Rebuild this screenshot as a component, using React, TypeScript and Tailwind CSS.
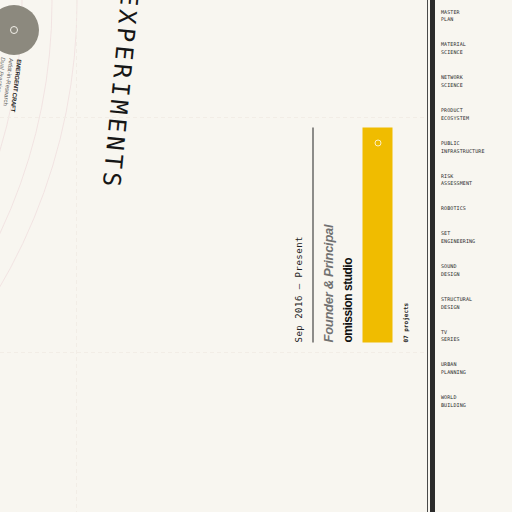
const topics = [
  ["MASTER", "PLAN"],
  ["MATERIAL", "SCIENCE"],
  ["NETWORK", "SCIENCE"],
  ["PRODUCT", "ECOSYSTEM"],
  ["PUBLIC", "INFRASTRUCTURE"],
  ["RISK", "ASSESSMENT"],
  ["ROBOTICS"],
  ["SET", "ENGINEERING"],
  ["SOUND", "DESIGN"],
  ["STRUCTURAL", "DESIGN"],
  ["TV", "SERIES"],
  ["URBAN", "PLANNING"],
  ["WORLD", "BUILDING"],
];

const Backdrop = () => (
  <svg className="absolute inset-0" width="427" height="512" viewBox="0 0 427 512">
    <g fill="none" stroke="#f0dede" strokeWidth="0.8">
      <circle cx="-488" cy="2" r="510" />
      <circle cx="-488" cy="2" r="540" />
      <circle cx="-488" cy="2" r="565" />
    </g>
    <g stroke="#f2ede6" strokeWidth="1" strokeDasharray="4 3">
      <line x1="76.5" y1="0" x2="76.5" y2="512" />
      <line x1="0" y1="117.5" x2="427" y2="117.5" />
      <line x1="0" y1="352.5" x2="427" y2="352.5" />
    </g>
  </svg>
);

const App = () => {
  return (
    <div className="flex h-[512px] w-[512px] overflow-hidden bg-[#f8f6f0]">
      <main className="relative w-[427px] shrink-0 overflow-hidden">
        <Backdrop />

        {/* node */}
        <div className="absolute left-[-11px] top-[5px] flex h-[50px] w-[50px] items-center justify-center rounded-full bg-[#8c897e]">
          <span className="h-[8px] w-[8px] rounded-full border border-[#f3f1ea]" />
        </div>
        <div className="absolute left-[-4px] top-[58px] rotate-[7deg] whitespace-nowrap font-['Liberation_Sans',sans-serif] text-[6px] leading-[8px] [writing-mode:vertical-rl]">
          <p className="font-bold tracking-[-0.2px] text-[#1a1a1a]">EMERGENT CRAFT</p>
          <p className="text-[#555]">Artist-in-Research</p>
          <p className="italic text-[#777]">Dual Practice</p>
        </div>

        <h1 className="absolute left-[108px] top-[-9px] rotate-[5.5deg] whitespace-nowrap font-['DejaVu_Sans_Mono',monospace] text-[24px] leading-none tracking-[3.7px] text-[#161616] [writing-mode:vertical-rl]">
          EXPERIMENTS
        </h1>

        {/* role card */}
        <div className="absolute left-[244.5px] top-[174.5px] flex h-[120px] w-[215px] -rotate-90 flex-col">
          <p className="whitespace-nowrap font-['DejaVu_Sans_Mono',monospace] text-[9px] leading-[12px] tracking-[0.5px] text-[#222]">
            Sep 2016 — Present
          </p>
          <div className="mt-[8px] h-px bg-[#222]" />
          <p className="mt-[8px] whitespace-nowrap font-['Liberation_Sans',sans-serif] text-[13px] font-bold italic leading-[13px] tracking-[-0.3px] text-[#727272]">
            Founder &amp; Principal
          </p>
          <p className="mt-[7px] whitespace-nowrap font-['Liberation_Sans',sans-serif] text-[12px] font-bold leading-[12px] tracking-[-0.5px] text-[#111]">
            omission studio
          </p>
          <div className="mt-[9px] flex h-[30px] items-center justify-end bg-[#f0bc00] pr-[12px]">
            <span className="h-[7px] w-[7px] rounded-full border border-[#fcf0c4]" />
          </div>
          <p className="mt-[9px] whitespace-nowrap font-['DejaVu_Sans_Mono',monospace] text-[6px] font-bold leading-[8px] text-[#222]">
            07 projects
          </p>
        </div>
      </main>

      <aside className="flex flex-1">
        <div className="w-px bg-[#4a4a4a]" />
        <div className="w-[2px]" />
        <div className="w-[5px] bg-[#2b2b2b]" />
        <nav className="flex flex-col gap-[17.2px] pl-[6px] pt-[8.6px] font-['DejaVu_Sans_Mono',monospace] text-[5px] leading-[7.8px] tracking-[0.1px] text-[#2a2a2a]">
          {topics.map((t) => (
            <a key={t.join(" ")} className="block">
              {t.map((w) => (
                <span key={w} className="block">
                  {w}
                </span>
              ))}
            </a>
          ))}
        </nav>
      </aside>
    </div>
  );
};

export default App;
